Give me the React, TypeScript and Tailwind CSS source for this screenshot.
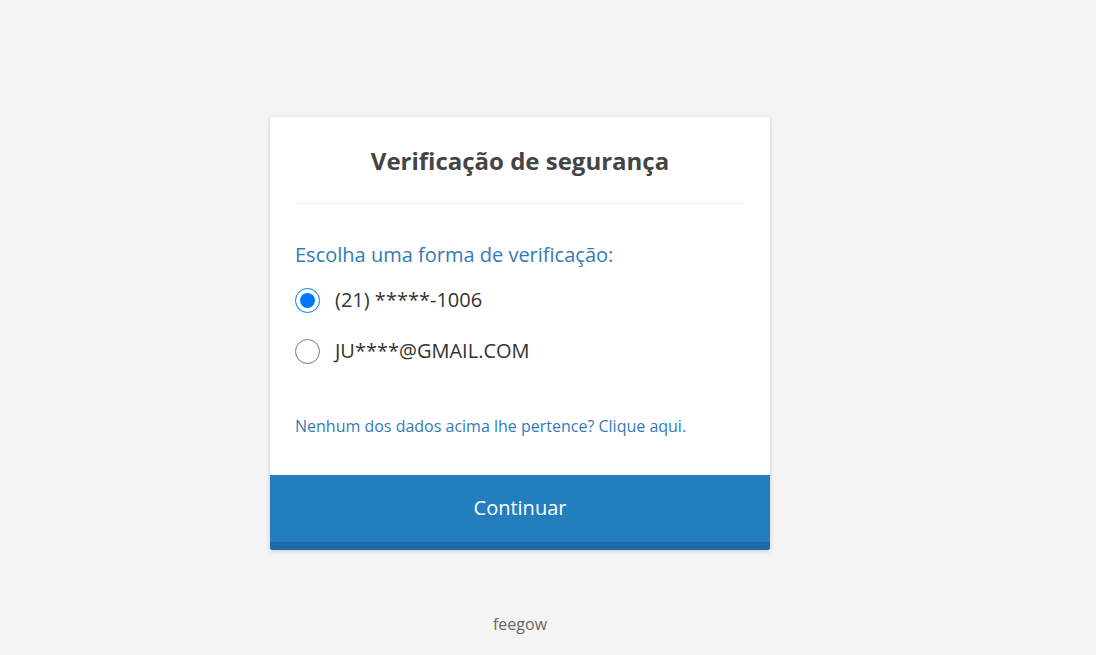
import { useState } from "react"

const options = [
  { id: "sms", label: "(21) *****-1006" },
  { id: "email", label: "JU****@GMAIL.COM" },
]

export default function App() {
  const [selected, setSelected] = useState("sms")

  return (
    <main
      className="min-h-[655px] bg-[#f4f4f4] text-[#333]"
      style={{ fontFamily: '"Open Sans", "Liberation Sans", sans-serif' }}
    >
      <div className="flex w-[1040px] flex-col items-center pt-[117px]">
        {/* Card */}
        <div className="w-[500px] overflow-hidden rounded-[3px] bg-white shadow-[0_1px_4px_rgba(0,0,0,0.18)]">
          <div className="px-[25px]">
            <h1 className="border-b border-[#eeeeee] pt-[28px] pb-[26px] text-center text-[24px] leading-[32px] font-bold text-[#444]">
              Verificação de segurança
            </h1>

            <p className="mt-[37px] text-[20px] leading-[28px] text-[#337ab7]">
              Escolha uma forma de verificação:
            </p>

            <div className="mt-[18px] flex flex-col gap-[25px]">
              {options.map((opt) => (
                <label key={opt.id} className="flex cursor-pointer items-center gap-[15px]">
                  <input
                    type="radio"
                    name="verify"
                    checked={selected === opt.id}
                    onChange={() => setSelected(opt.id)}
                    className="m-0 h-[25px] w-[25px] shrink-0"
                  />
                  <span className="text-[20px] leading-[26px] text-[#333]">{opt.label}</span>
                </label>
              ))}
            </div>

            <p className="mt-[51px] pb-[38px] text-[16px] leading-[22px] text-[#337ab7]">
              Nenhum dos dados acima lhe pertence? Clique aqui.
            </p>
          </div>

          <button className="block h-[75px] w-full border-b-[8px] border-[#1f6aa6] bg-[#227ebd] pb-[2px] text-[20px] text-white">
            Continuar
          </button>
        </div>

        <p className="mt-[62px] text-[16px] text-[#666]">feegow</p>
      </div>
    </main>
  )
}
